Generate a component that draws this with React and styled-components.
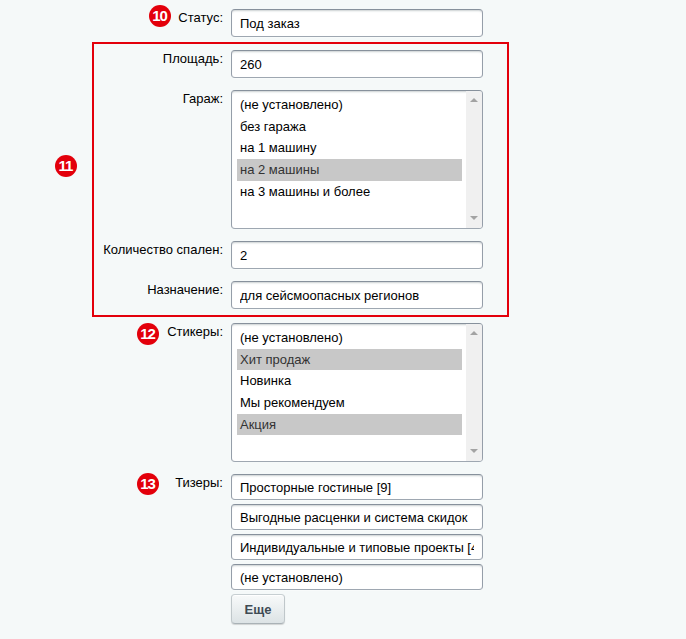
import React from "react";
import styled, { createGlobalStyle } from "styled-components";

const GlobalStyle = createGlobalStyle`
  html, body {
    margin: 0;
    padding: 0;
    background: #f5f9f9;
  }
  body {
    font-family: "Liberation Sans", Arial, sans-serif;
    font-size: 13px;
    color: #000;
  }
`;

const Page = styled.div`
  display: flex;
  flex-direction: column;
  align-items: flex-start;
  padding-top: 3px;
  min-height: 636px;
`;

const Row = styled.div`
  position: relative;
  display: grid;
  grid-template-columns: ${(p) => p.$labelWidth || 223}px 252px;
  column-gap: 8px;
  padding: 6px 0;
`;

const Label = styled.div`
  text-align: right;
  line-height: 16px;
  padding-top: 1px;
  white-space: nowrap;
`;

const Field = styled.div`
  display: flex;
  flex-direction: column;
  gap: 4px;
  align-items: flex-start;
`;

const TextInput = styled.input`
  box-sizing: border-box;
  width: 252px;
  height: ${(p) => (p.$compact ? 26 : 28)}px;
  margin: 0;
  padding: 0 8px;
  font-family: "Liberation Sans", Arial, sans-serif;
  font-size: 13px;
  color: #000;
  background: #fff;
  border: 1px solid;
  border-color: #87919c #959ea9 #9ea7b1 #959ea9;
  border-radius: 4px;
  box-shadow: 0 1px 0 0 rgba(255, 255, 255, 0.3),
    inset 0 2px 2px -1px rgba(180, 188, 191, 0.7);
  outline: none;
`;

/* Multi-select list with a classic scrollbar strip */
const ListBox = styled.div`
  box-sizing: border-box;
  width: 252px;
  height: 139px;
  display: flex;
  background: #fff;
  border: 1px solid;
  border-color: #87919c #959ea9 #9ea7b1 #959ea9;
  border-radius: 4px;
  box-shadow: inset 0 2px 2px -1px rgba(180, 188, 191, 0.7);
  overflow: hidden;
`;

const Options = styled.div`
  flex: 1;
  padding: 3px 4px 0 5px;
`;

const Option = styled.div`
  height: 21.7px;
  line-height: 21.7px;
  padding-left: 3px;
  white-space: nowrap;
  color: ${(p) => (p.$selected ? "#333" : "#000")};
  background: ${(p) => (p.$selected ? "#c8c8c8" : "transparent")};
`;

const ScrollTrack = styled.div`
  width: 16px;
  background: #f0f0f0;
  display: flex;
  flex-direction: column;
  justify-content: space-between;
  align-items: center;
  padding: 7px 0 8px;
`;

const Arrow = styled.span`
  width: 0;
  height: 0;
  border-left: 4px solid transparent;
  border-right: 4px solid transparent;
  ${(p) =>
    p.$down
      ? "border-top: 4px solid #a3a3a3;"
      : "border-bottom: 4px solid #a3a3a3;"}
`;

const Group = styled.div`
  position: relative;
  margin-left: 92px;
  margin-top: -1px;
  width: 413px;
  border: 2px solid #e3000b;
`;

const Marker = styled.span`
  position: absolute;
  left: ${(p) => p.$x}px;
  top: ${(p) => p.$y}px;
  width: 22px;
  height: 22px;
  border-radius: 50%;
  background: #e3000b;
  color: #fff;
  font-family: "Liberation Sans", Arial, sans-serif;
  font-weight: bold;
  font-size: 15px;
  letter-spacing: -1px;
  line-height: 22px;
  text-align: center;
  text-indent: -1px;
`;

const Button = styled.button`
  box-sizing: border-box;
  width: 54px;
  height: 30px;
  margin: 0;
  padding: 0;
  font-family: "Liberation Sans", Arial, sans-serif;
  font-size: 13px;
  font-weight: bold;
  color: #3f4b54;
  background: linear-gradient(to bottom, #f8fafa, #dce3e5);
  border: 1px solid;
  border-color: #c7cfd2 #bfc7ca #a9b2b6;
  border-radius: 4px;
  box-shadow: 0 1px 1px rgba(0, 0, 0, 0.15), inset 0 1px 0 #fff;
`;

function SelectList({ items, selected }) {
  return (
    <ListBox>
      <Options>
        {items.map((item) => (
          <Option key={item} $selected={selected.includes(item)}>
            {item}
          </Option>
        ))}
      </Options>
      <ScrollTrack>
        <Arrow />
        <Arrow $down />
      </ScrollTrack>
    </ListBox>
  );
}

const garageOptions = [
  "(не установлено)",
  "без гаража",
  "на 1 машину",
  "на 2 машины",
  "на 3 машины и более",
];

const stickerOptions = [
  "(не установлено)",
  "Хит продаж",
  "Новинка",
  "Мы рекомендуем",
  "Акция",
];

const teasers = [
  "Просторные гостиные [9]",
  "Выгодные расценки и система скидок",
  "Индивидуальные и типовые проекты [4]",
  "(не установлено)",
];

export default function App() {
  return (
    <>
      <GlobalStyle />
      <Page>
        <Row>
          <Marker $x={149} $y={2}>10</Marker>
          <Label>Статус:</Label>
          <Field>
            <TextInput readOnly value="Под заказ" />
          </Field>
        </Row>

        <Group>
          <Marker $x={-39} $y={111}>11</Marker>
          <Row $labelWidth={129}>
            <Label>Площадь:</Label>
            <Field>
              <TextInput readOnly value="260" />
            </Field>
          </Row>
          <Row $labelWidth={129}>
            <Label>Гараж:</Label>
            <Field>
              <SelectList items={garageOptions} selected={["на 2 машины"]} />
            </Field>
          </Row>
          <Row $labelWidth={129}>
            <Label>Количество спален:</Label>
            <Field>
              <TextInput readOnly value="2" />
            </Field>
          </Row>
          <Row $labelWidth={129}>
            <Label>Назначение:</Label>
            <Field>
              <TextInput readOnly value="для сейсмоопасных регионов" />
            </Field>
          </Row>
        </Group>

        <Row>
          <Marker $x={137} $y={6}>12</Marker>
          <Label>Стикеры:</Label>
          <Field>
            <SelectList
              items={stickerOptions}
              selected={["Хит продаж", "Акция"]}
            />
          </Field>
        </Row>

        <Row>
          <Marker $x={137} $y={5}>13</Marker>
          <Label>Тизеры:</Label>
          <Field>
            {teasers.map((t) => (
              <TextInput key={t} $compact readOnly value={t} />
            ))}
            <Button type="button">Еще</Button>
          </Field>
        </Row>
      </Page>
    </>
  );
}
